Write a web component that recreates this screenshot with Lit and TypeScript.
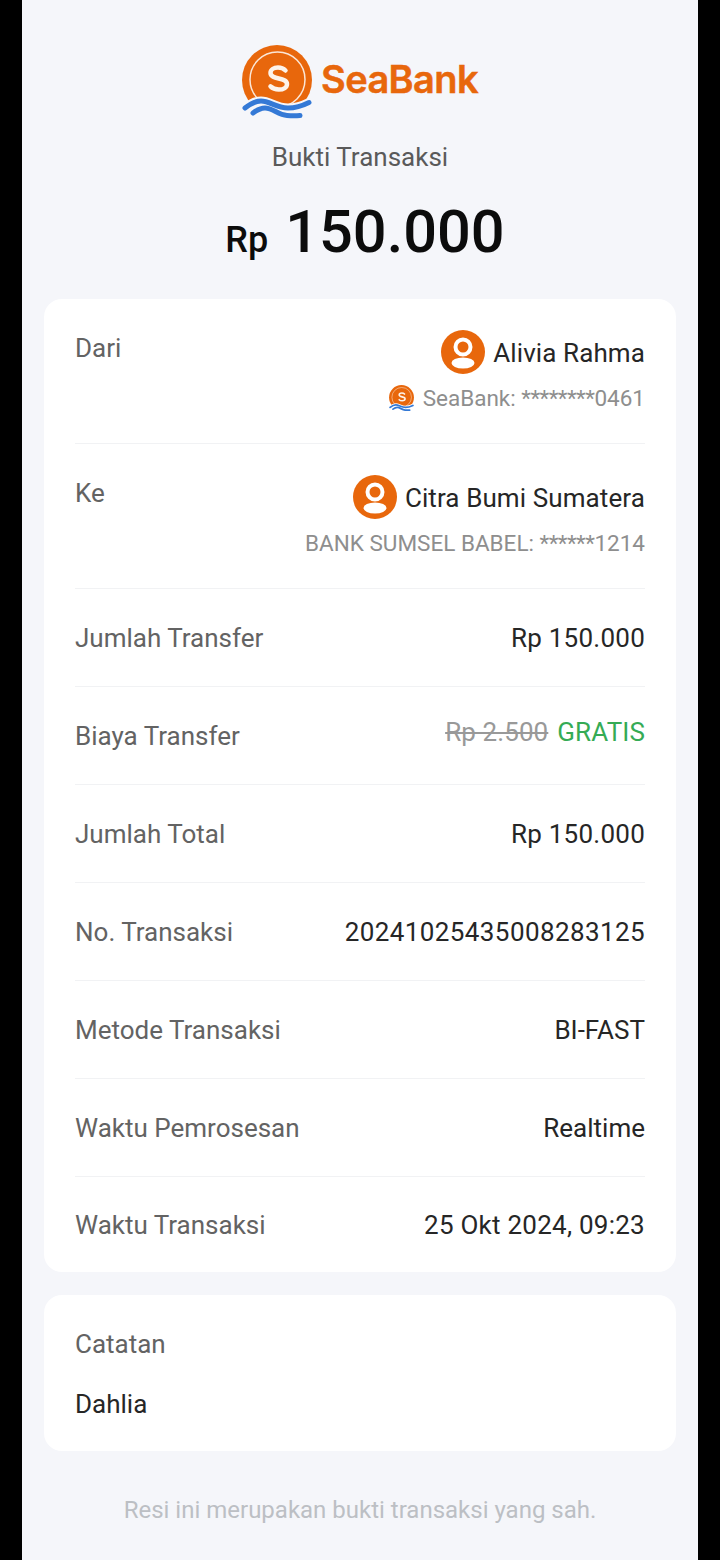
import { LitElement, css, html } from "lit";
import { customElement } from "lit/decorators.js";

const upperWave = "M3 63c5-4 10-7 16-7 9 0 15 7 27 7 8 0 14-2 21-5.500";
const lowerWave = "M11 68c4-3 8-5 12-5 8 0 13 7 22 7.500 5 .3 9 .3 13 0";

// bg is the colour behind the mark, the waves cut the coin with it
const logoMark = (cls: string, bg: string) => html`<svg class=${cls} viewBox="0 0 70 76" aria-hidden="true">
  <circle cx="35" cy="35" r="35" fill="#e8670c"></circle>
  <circle cx="35.500" cy="34.500" r="27.500" fill="none" stroke="#fbe6d6" stroke-width="1.500"></circle>
  <path
    d="M43.500 25.500c-1.800-1.800-4.500-2.900-7.500-2.900-4.300 0-7.500 2.200-7.500 5.500 0 7 16.500 3.700 16.500 10.800 0 3.500-3.500 5.600-8.200 5.600-3.400 0-6.300-1.100-8.300-3.100"
    fill="none"
    stroke="#fdf3ea"
    stroke-width="4.500"
    stroke-linecap="round"
  ></path>
  <path d="${upperWave}V76H3z" fill=${bg} stroke=${bg} stroke-width="9" stroke-linejoin="round"></path>
  <path d=${upperWave} fill="none" stroke="#3479d6" stroke-width="5" stroke-linecap="round"></path>
  <path d=${lowerWave} fill="none" stroke="#3479d6" stroke-width="5" stroke-linecap="round"></path>
</svg>`;

const avatar = html`<svg class="avatar" viewBox="0 0 44 44" aria-hidden="true">
  <circle cx="22" cy="22" r="22" fill="#e8670c"></circle>
  <circle cx="22" cy="17" r="7.500" fill="none" stroke="#fff" stroke-width="4"></circle>
  <ellipse cx="22" cy="33" rx="11.500" ry="5.500" fill="#fff"></ellipse>
</svg>`;

@customElement("app-root")
export class AppRoot extends LitElement {
  static styles = css`
    :host {
      display: block;
      width: 720px;
      height: 1560px;
      overflow: hidden;
      background: #000;
      font-family: Roboto, "Liberation Sans", sans-serif;
    }

    .screen {
      box-sizing: border-box;
      width: 676px;
      height: 1560px;
      margin: 0 22px;
      padding: 45px 22px 0;
      background: #f5f6fa;
    }

    .logo {
      display: flex;
      justify-content: center;
      align-items: flex-start;
      gap: 9px;
      height: 77px;
    }

    .logo-mark {
      width: 70px;
      height: 76px;
    }

    .logo-text {
      margin-top: 12px;
      color: #e8670c;
      font-family: Inter, sans-serif;
      font-size: 38px;
      font-weight: 600;
      line-height: 44px;
      letter-spacing: -0.6px;
      -webkit-text-stroke: 0.5px #e8670c;
    }

    .mini-mark {
      width: 25px;
      height: 27px;
    }

    .title {
      margin-top: 19px;
      color: #5a5a5a;
      font-size: 26px;
      line-height: 32px;
      text-align: center;
    }

    .amount {
      display: flex;
      justify-content: center;
      align-items: baseline;
      gap: 17px;
      height: 72px;
      margin-top: 23px;
      padding-left: 10px;
      color: #0c0c0c;
      font-weight: 500;
      line-height: 72px;
    }

    .amount .cur {
      font-size: 36px;
    }

    .amount .num {
      font-size: 59.500px;
    }

    .card {
      margin-top: 23px;
      padding: 0 31px;
      background: #fff;
      border-radius: 18px;
    }

    .card.first {
      margin-top: 31px;
    }

    .row {
      display: flex;
      justify-content: space-between;
      align-items: center;
      height: 98px;
      box-sizing: border-box;
      border-bottom: 1px solid #f1f2f4;
      font-size: 26px;
      line-height: 32px;
      color: #636363;
    }

    .row:last-child {
      border-bottom: none;
      height: 95px;
    }

    .value {
      color: #262626;
    }

    .value.digits {
      letter-spacing: 0.25px;
    }

    .value.long {
      letter-spacing: 0.4px;
    }

    .party {
      align-items: flex-start;
      height: 145px;
      padding-top: 33px;
    }

    .who {
      display: flex;
      flex-direction: column;
      align-items: flex-end;
      margin-top: -2px;
    }

    .name {
      display: flex;
      align-items: center;
      gap: 8px;
      height: 44px;
      color: #262626;
      letter-spacing: 0.1px;
    }

    .name span {
      padding-top: 2px;
    }

    .avatar {
      width: 44px;
      height: 44px;
    }

    .account {
      display: flex;
      align-items: center;
      gap: 9px;
      margin-top: 8px;
      color: #8e8e8e;
      font-size: 22.500px;
      line-height: 32px;
    }

    .mask {
      letter-spacing: -0.55px;
    }

    .fee {
      display: flex;
      gap: 9px;
      margin-top: -8px;
      letter-spacing: 0.1px;
    }

    .fee s {
      color: #999;
    }

    .fee span {
      color: #35ab55;
    }

    .note {
      padding-top: 33px;
      padding-bottom: 31px;
      font-size: 26px;
      line-height: 32px;
      color: #636363;
    }

    .note .value {
      margin-top: 28px;
    }

    .footer {
      margin-top: 43px;
      color: #bcbfc4;
      font-size: 24px;
      line-height: 32px;
      text-align: center;
    }
  `;

  rows: [string, string, string][] = [
    ["Jumlah Total", "Rp 150.000", "digits"],
    ["No. Transaksi", "20241025435008283125", "long"],
    ["Metode Transaksi", "BI-FAST", ""],
    ["Waktu Pemrosesan", "Realtime", ""],
    ["Waktu Transaksi", "25 Okt 2024, 09:23", "digits"],
  ];

  render() {
    return html`<div class="screen">
      <div class="logo">
        ${logoMark("logo-mark", "#f5f6fa")}
        <span class="logo-text">SeaBank</span>
      </div>
      <div class="title">Bukti Transaksi</div>
      <div class="amount">
        <span class="cur">Rp</span><span class="num">150.000</span>
      </div>

      <div class="card first">
        <div class="row party">
          <span>Dari</span>
          <div class="who">
            <div class="name">${avatar}<span>Alivia Rahma</span></div>
            <div class="account">
              ${logoMark("mini-mark", "#fff")}
              <div>SeaBank: <span class="mask">********</span>0461</div>
            </div>
          </div>
        </div>
        <div class="row party">
          <span>Ke</span>
          <div class="who">
            <div class="name">${avatar}<span>Citra Bumi Sumatera</span></div>
            <div class="account">
              <div>BANK SUMSEL BABEL: <span class="mask">******</span>1214</div>
            </div>
          </div>
        </div>
        <div class="row">
          <span>Jumlah Transfer</span>
          <span class="value digits">Rp 150.000</span>
        </div>
        <div class="row">
          <span>Biaya Transfer</span>
          <div class="fee"><s>Rp 2.500</s><span>GRATIS</span></div>
        </div>
        ${this.rows.map(
          ([label, value, kind]) => html`<div class="row">
            <span>${label}</span>
            <span class="value ${kind}">${value}</span>
          </div>`,
        )}
      </div>

      <div class="card note">
        <div>Catatan</div>
        <div class="value">Dahlia</div>
      </div>

      <div class="footer">Resi ini merupakan bukti transaksi yang sah.</div>
    </div>`;
  }
}
